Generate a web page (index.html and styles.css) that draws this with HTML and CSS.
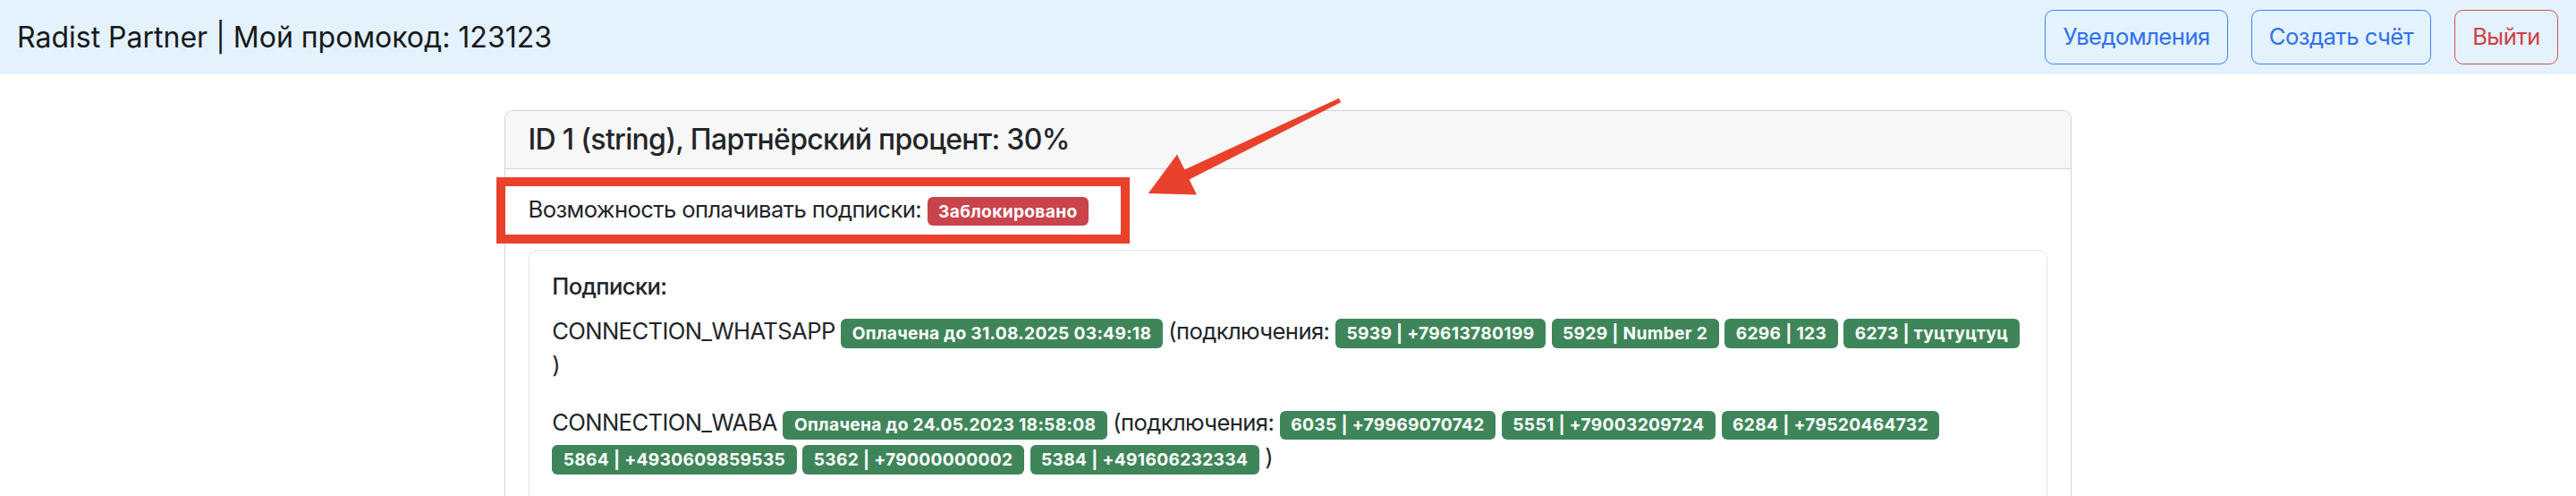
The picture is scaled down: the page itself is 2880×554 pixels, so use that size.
FILE: index.html
```html
<!DOCTYPE html>
<html lang="ru">
<head>
<meta charset="utf-8">
<title>Radist Partner</title>
<link rel="stylesheet" href="styles.css">
</head>
<body>
<nav class="navbar">
  <span class="brand">Radist Partner | Мой промокод: 123123</span>
  <div class="nav-actions">
    <button class="btn btn-blue" type="button">Уведомления</button>
    <button class="btn btn-blue" type="button">Создать счёт</button>
    <button class="btn btn-red" type="button">Выйти</button>
  </div>
</nav>
<main class="container">
  <section class="card">
    <header class="card-header"><h5 class="card-title">ID 1 (string), Партнёрский процент: 30%</h5></header>
    <div class="card-body">
      <p class="line">Возможность оплачивать подписки: <span class="badge badge-red">Заблокировано</span></p>
      <div class="subcard">
        <h6 class="subcard-title">Подписки:</h6>
        <p class="line">CONNECTION_WHATSAPP <span class="badge">Оплачена до 31.08.2025 03:49:18</span> (подключения: <span class="badge">5939 | +79613780199</span> <span class="badge">5929 | Number 2</span> <span class="badge">6296 | 123</span> <span class="badge">6273 | туцтуцтуц</span> )</p>
        <p class="line">CONNECTION_WABA <span class="badge">Оплачена до 24.05.2023 18:58:08</span> (подключения: <span class="badge">6035 | +79969070742</span> <span class="badge">5551 | +79003209724</span> <span class="badge">6284 | +79520464732</span> <span class="badge">5864 | +4930609859535</span> <span class="badge">5362 | +79000000002</span> <span class="badge">5384 | +491606232334</span> )</p>
      </div>
    </div>
  </section>
</main>
<div class="annot-box"></div>
<svg class="annot-arrow" width="2880" height="554" viewBox="0 0 2880 554" xmlns="http://www.w3.org/2000/svg">
  <polygon fill="#e9412b" points="1496.9,109.8 1324.4,189.6 1316,172.5 1283.8,216.1 1338,217.5 1329.6,200.4 1499.1,114.2"/>
</svg>
</body>
</html>
```

FILE: styles.css
```css
* { box-sizing: border-box; }

html, body {
  margin: 0;
  padding: 0;
}

body {
  position: relative;
  font-family: "Inter", "Liberation Sans", sans-serif;
  font-size: 25.6px;
  line-height: 1.5;
  letter-spacing: -0.6px;
  color: #212529;
  background: #ffffff;
}

.navbar {
  display: flex;
  align-items: center;
  justify-content: space-between;
  height: 83px;
  padding: 0 20px 0 19px;
  background: #e3f2fd;
}

.brand {
  font-size: 32px;
  line-height: 1.5;
  letter-spacing: 0;
  color: #16181b;
}

.nav-actions {
  display: flex;
  gap: 25.6px;
}

.btn {
  font-family: inherit;
  font-size: 25.6px;
  line-height: 1.5;
  letter-spacing: -0.5px;
  padding: 9.6px 19.2px;
  height: 61px;
  border-radius: 9.6px;
  border: 1.6px solid;
  background: transparent;
  cursor: pointer;
}

.btn-blue {
  color: #2f6fed;
  border-color: #3f7ef0;
}

.btn-red {
  color: #cf3f46;
  border-color: #d24a50;
}

.container {
  width: 1752px;
  margin: 40px auto 0;
}

.card {
  border: 1px solid #d3d3d3;
  border-radius: 9.6px;
  overflow: hidden;
}

.card-header {
  background: #f7f7f7;
  border-bottom: 1px solid #d3d3d3;
  padding: 12.8px 25.6px;
}

.card-title {
  margin: 0;
  font-size: 32px;
  font-weight: 500;
  line-height: 1.2;
  letter-spacing: -0.7px;
}

.card-body {
  padding: 25.6px;
}

.line {
  margin: 0 0 25.6px;
}

.subcard {
  border: 1px solid #e2e3e5;
  border-radius: 9.6px;
  padding: 25.6px;
  min-height: 400px;
}

.subcard-title {
  margin: 0 0 15px;
  font-size: 25.6px;
  font-weight: 500;
  line-height: 1.2;
}

.badge {
  display: inline-block;
  padding: 6.7px 12.5px;
  font-size: 19.2px;
  font-weight: 700;
  line-height: 1;
  letter-spacing: 0.3px;
  color: #ffffff;
  white-space: nowrap;
  vertical-align: baseline;
  border-radius: 6px;
  background: #3f855a;
}

.badge-red {
  background: #c9434c;
}

.annot-box {
  position: absolute;
  left: 555px;
  top: 198px;
  width: 708px;
  height: 74px;
  border: 10px solid #e9412b;
  pointer-events: none;
}

.annot-arrow {
  position: absolute;
  left: 0;
  top: 0;
  pointer-events: none;
}
```
